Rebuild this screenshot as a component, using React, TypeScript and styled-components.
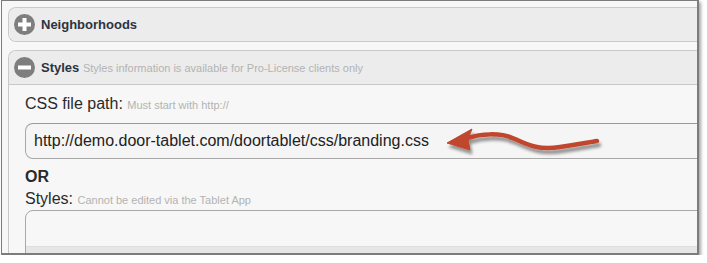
import styled, { createGlobalStyle } from "styled-components";

const GlobalStyle = createGlobalStyle`
  html, body {
    margin: 0;
    padding: 0;
    background: #fff;
  }
  body {
    font-family: "Liberation Sans", Arial, sans-serif;
  }
`;

const StyledFrame = styled.div`
  position: relative;
  box-sizing: border-box;
  margin-left: 1px;
  width: 698px;
  height: 255px;
  padding: 6px 0 0 6px;
  background-color: #f7f7f7;
  border: 1px solid #7c7c7c;
  border-right-width: 2px;
  border-bottom-width: 2px;
  box-shadow: 2px 2px 3px rgba(0, 0, 0, 0.35);
  overflow: hidden;
`;

const StyledPanel = styled.section<{ $open?: boolean }>`
  border: 1px solid #c9c9c9;
  border-right: none;
  border-radius: ${(props) => (props.$open ? "8px 0 0 0" : "8px 0 0 8px")};
  margin-bottom: 8px;
  background-color: #f7f7f7;
`;

const StyledHeader = styled.div<{ $open?: boolean }>`
  height: 33px;
  display: flex;
  flex-direction: row;
  align-items: center;
  padding-left: 5px;
  gap: 6px;
  background-color: #ececec;
  border-radius: ${(props) => (props.$open ? "8px 0 0 0" : "8px 0 0 8px")};
  border-bottom: ${(props) => (props.$open ? "1px solid #c9c9c9" : "none")};
`;

const StyledToggle = styled.span`
  width: 21px;
  height: 21px;
  border-radius: 50%;
  background-color: #7e7e7e;
  display: flex;
  align-items: center;
  justify-content: center;
  flex-shrink: 0;
`;

const StyledTitle = styled.span`
  font-size: 13px;
  font-weight: bold;
  color: #2c3340;
  white-space: nowrap;
`;

const StyledHint = styled.span<{ $size?: number }>`
  font-size: ${(props) => props.$size || 11}px;
  font-weight: normal;
  color: #b3b3b3;
`;

const StyledBody = styled.div`
  padding: 10px 0 0 16px;
  height: 180px;
`;

const StyledLabel = styled.div<{ $bold?: boolean; $top?: number }>`
  font-size: 16px;
  line-height: 18px;
  font-weight: ${(props) => (props.$bold ? "bold" : "normal")};
  color: #2a2a2a;
  margin-top: ${(props) => props.$top || 0}px;
  white-space: nowrap;
`;

const StyledInput = styled.div`
  box-sizing: border-box;
  margin-top: 9px;
  height: 36px;
  width: calc(100% + 20px);
  display: flex;
  align-items: center;
  padding-left: 8px;
  border: 1px solid #a8a8a8;
  border-top-color: #9a9a9a;
  border-radius: 8px;
  background-color: #f5f5f5;
  font-size: 16px;
  color: #222;
  white-space: nowrap;
`;

const StyledTextArea = styled.div`
  box-sizing: border-box;
  margin-top: 1px;
  height: 60px;
  width: calc(100% + 20px);
  padding-top: 35px;
  border: 1px solid #a8a8a8;
  border-radius: 8px 0 0 0;
  background-color: #f7f7f7;
`;

const StyledScrollTrack = styled.div`
  height: 8px;
  background-color: #e6e6e6;
  border-top: 1px solid #dedede;
`;

const StyledArrow = styled.svg`
  position: absolute;
  left: 438px;
  top: 119px;
  overflow: visible;
`;

const Toggle = ({ open }: { open?: boolean }) => (
  <StyledToggle>
    <svg width="13" height="13" viewBox="0 0 13 13">
      <rect x="0" y="4.5" width="13" height="4" fill="#fff" />
      {!open && <rect x="4.5" y="0" width="4" height="13" fill="#fff" />}
    </svg>
  </StyledToggle>
);

const App = () => {
  return (
    <>
      <GlobalStyle />
      <StyledFrame>
        <StyledPanel>
          <StyledHeader>
            <Toggle />
            <StyledTitle>Neighborhoods</StyledTitle>
          </StyledHeader>
        </StyledPanel>
        <StyledPanel $open>
          <StyledHeader $open>
            <Toggle open />
            <StyledTitle>
              Styles{" "}
              <StyledHint>
                Styles information is available for Pro-License clients only
              </StyledHint>
            </StyledTitle>
          </StyledHeader>
          <StyledBody>
            <StyledLabel>
              CSS file path: <StyledHint>Must start with http://</StyledHint>
            </StyledLabel>
            <StyledInput>
              http://demo.door-tablet.com/doortablet/css/branding.css
            </StyledInput>
            <StyledLabel $bold $top={9}>
              OR
            </StyledLabel>
            <StyledLabel $top={4}>
              Styles: <StyledHint>Cannot be edited via the Tablet App</StyledHint>
            </StyledLabel>
            <StyledTextArea>
              <StyledScrollTrack />
            </StyledTextArea>
          </StyledBody>
        </StyledPanel>
        <StyledArrow width="170" height="45" viewBox="0 0 170 45">
          <defs>
            <filter id="shadow" x="-20%" y="-50%" width="140%" height="200%">
              <feDropShadow dx="2" dy="4" stdDeviation="1.6" floodColor="#000" floodOpacity="0.4" />
            </filter>
          </defs>
          <g filter="url(#shadow)" fill="#c0462f" stroke="#c0462f">
            <path
              d="M27 18 C40 14, 60 12, 75 19 S100 30, 120 27 S150 22, 157 21"
              fill="none"
              strokeWidth="4.5"
              strokeLinecap="round"
            />
            <polygon points="7,23 32,9 28,19 30,30" strokeWidth="1" strokeLinejoin="round" />
          </g>
        </StyledArrow>
      </StyledFrame>
    </>
  );
};

export default App;
